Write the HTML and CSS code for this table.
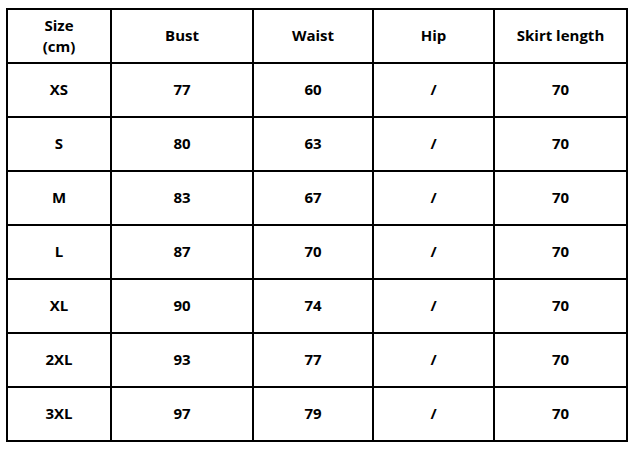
FILE: index.html
```html
<!DOCTYPE html>
<html>
<head>
<meta charset="utf-8">
<link rel="stylesheet" href="styles.css">
</head>
<body>
<table class="size-table">
  <colgroup>
    <col class="c1"><col class="c2"><col class="c3"><col class="c4"><col class="c5">
  </colgroup>
  <tr class="head"><td>Size<br>(cm)</td><td>Bust</td><td>Waist</td><td>Hip</td><td>Skirt length</td></tr>
  <tr><td>XS</td><td>77</td><td>60</td><td>/</td><td>70</td></tr>
  <tr><td>S</td><td>80</td><td>63</td><td>/</td><td>70</td></tr>
  <tr><td>M</td><td>83</td><td>67</td><td>/</td><td>70</td></tr>
  <tr><td>L</td><td>87</td><td>70</td><td>/</td><td>70</td></tr>
  <tr><td>XL</td><td>90</td><td>74</td><td>/</td><td>70</td></tr>
  <tr><td>2XL</td><td>93</td><td>77</td><td>/</td><td>70</td></tr>
  <tr><td>3XL</td><td>97</td><td>79</td><td>/</td><td>70</td></tr>
</table>
</body>
</html>
```
FILE: styles.css
```css
html, body {
  margin: 0;
  padding: 0;
  background: #ffffff;
}
body {
  padding: 8px 0 0 6px;
  font-family: "Open Sans", "Noto Sans", sans-serif;
  font-weight: 700;
  font-size: 15px;
  color: #000;
}
.size-table {
  border-collapse: collapse;
  table-layout: fixed;
  width: 620px;
}
.c1 { width: 104px; }
.c2 { width: 142px; }
.c3 { width: 120px; }
.c4 { width: 121px; }
.c5 { width: 133px; }
.size-table tr {
  height: 54px;
}
.size-table td {
  border: 2px solid #000;
  padding: 0 0 1px 0;
  text-align: center;
  vertical-align: middle;
  line-height: 21px;
}
```
